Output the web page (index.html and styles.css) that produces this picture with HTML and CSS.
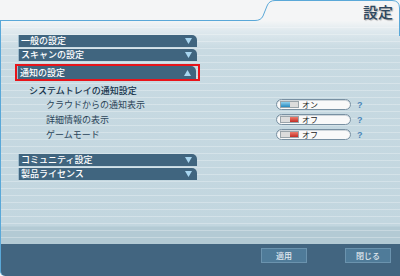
FILE: index.html
```html
<!DOCTYPE html>
<html lang="ja">
<head>
    <meta charset="UTF-8">
    <title>設定</title>
    <link rel="stylesheet" href="styles.css">
</head>
<body>

<div class="window">
    <!-- Title tab -->
    <header class="titlebar">
        <svg class="tab-outline" width="400" height="40" viewBox="0 0 400 40">
            <path d="M0 20.5 H255 Q261 20.5 263 16 L267 6 Q269 0.5 275 0.5 H392 Q399.5 0.5 399.5 8 V36" fill="none" stroke="#5aa8d8" stroke-width="1"/>
        </svg>
        <h1 class="title">設定</h1>
    </header>

    <!-- Settings list -->
    <main class="panel">
        <div class="bar">一般の設定
            <svg class="arrow" width="7" height="6" viewBox="0 0 7 6"><path d="M0 0 H7 L3.5 6 Z"/></svg>
        </div>
        <div class="bar">スキャンの設定
            <svg class="arrow" width="7" height="6" viewBox="0 0 7 6"><path d="M0 0 H7 L3.5 6 Z"/></svg>
        </div>
        <div class="bar-selected">
            <div class="bar bar-open">通知の設定
                <svg class="arrow" width="7" height="6" viewBox="0 0 7 6"><path d="M0 6 H7 L3.5 0 Z"/></svg>
            </div>
        </div>

        <div class="group-title">システムトレイの通知設定</div>
        <div class="row">
            <span class="row-label">クラウドからの通知表示</span>
            <span class="pill"><span class="switch on"><span></span><span></span></span>オン</span>
            <span class="help">?</span>
        </div>
        <div class="row">
            <span class="row-label">詳細情報の表示</span>
            <span class="pill"><span class="switch off"><span></span><span></span></span>オフ</span>
            <span class="help">?</span>
        </div>
        <div class="row">
            <span class="row-label">ゲームモード</span>
            <span class="pill"><span class="switch off"><span></span><span></span></span>オフ</span>
            <span class="help">?</span>
        </div>

        <div class="bar bar-spaced">コミュニティ設定
            <svg class="arrow" width="7" height="6" viewBox="0 0 7 6"><path d="M0 0 H7 L3.5 6 Z"/></svg>
        </div>
        <div class="bar">製品ライセンス
            <svg class="arrow" width="7" height="6" viewBox="0 0 7 6"><path d="M0 0 H7 L3.5 6 Z"/></svg>
        </div>
    </main>

    <!-- Bottom buttons -->
    <footer class="actions">
        <button class="action-button">適用</button>
        <button class="action-button">閉じる</button>
    </footer>
</div>

</body>
</html>
```

FILE: styles.css
```css
* {
    box-sizing: border-box;
}

body {
    margin: 0;
    width: 400px;
    height: 276px;
    overflow: hidden;
    background-color: #f4f5f6;
    font-family: "Noto Sans CJK JP", sans-serif;
}

.window {
    display: flex;
    flex-direction: column;
    height: 276px;
}

/* Title tab */
.titlebar {
    position: relative;
    height: 21px;
    display: flex;
    justify-content: flex-end;
    padding: 3px 7px 0 0;
}

.tab-outline {
    position: absolute;
    top: 0;
    left: 0;
    z-index: 2;
    pointer-events: none;
}

.title {
    margin: 0;
    font-size: 15px;
    font-weight: 500;
    line-height: 17px;
    color: #2f4860;
    text-shadow: 1px 1px 1px rgba(0, 0, 0, 0.3);
}

/* Panel */
.panel {
    flex: 1;
    display: flex;
    flex-direction: column;
    align-items: flex-start;
    padding: 14px 0 0 17px;
    border-left: 1px solid #5aa8d8;
    background:
        repeating-linear-gradient(to bottom, transparent 0, transparent 6px, rgba(255, 255, 255, 0.28) 6px, rgba(255, 255, 255, 0.28) 7px),
        linear-gradient(to bottom, #f3f5f6 0, #dfe9ee 10px, #c8dae2 28px, #c2d6df 205px, #b3cad4 206px, #b3cad4 100%);
}

/* Section bars */
.bar {
    width: 179px;
    height: 12px;
    margin-bottom: 2px;
    display: flex;
    justify-content: space-between;
    align-items: center;
    padding: 0 5px 0 2px;
    background-color: #40657f;
    border-left: 1px solid #9dbbcc;
    border-radius: 0 5px 0 0;
    color: #fff;
    font-size: 9px;
    font-weight: 500;
    line-height: 12px;
}

.arrow {
    fill: #a9d6f0;
}

.bar-selected {
    margin: 1px 0 2px -3px;
    border: 2px solid #e8141a;
    padding: 0 2px 0 0;
}

.bar-open {
    height: 13px;
    margin-bottom: 0;
}

.bar-spaced {
    margin-top: 12px;
}

/* Notification rows */
.group-title {
    height: 12px;
    margin: 2px 0 0 11px;
    font-size: 9px;
    font-weight: 500;
    line-height: 12px;
    color: #14324a;
}

.row {
    height: 15px;
    display: flex;
    align-items: center;
}

.row-label {
    width: 258px;
    padding-left: 28px;
    font-size: 9px;
    color: #2a4458;
}

.pill {
    width: 75px;
    height: 11px;
    display: flex;
    align-items: center;
    gap: 3px;
    padding-left: 3px;
    border: 1px solid #7890a2;
    border-radius: 6px;
    background-color: #f9f9f9;
    box-shadow: inset 0 1px 0 #cfd6db;
    font-size: 8px;
    line-height: 9px;
    color: #222;
}

.switch {
    width: 19px;
    height: 7px;
    display: flex;
    border: 1px solid #9aa4aa;
}

.switch span {
    flex: 1;
    background-color: #dcdcdc;
}

.switch.on span:first-child {
    background: linear-gradient(to bottom, #8ed0ef, #2688bd);
}

.switch.off span:last-child {
    background: linear-gradient(to bottom, #ee7a6a, #c22e26);
}

.help {
    margin-left: 6px;
    font-family: "Liberation Sans", sans-serif;
    font-size: 9px;
    font-weight: bold;
    color: #4a86b8;
}

/* Bottom buttons */
.actions {
    height: 32px;
    display: flex;
    justify-content: flex-end;
    gap: 38px;
    padding: 4px 9px 0 0;
    background-color: #426580;
    border-left: 1px solid #5aa8d8;
    border-radius: 0 0 0 5px;
}

.action-button {
    width: 46px;
    height: 15px;
    padding: 0;
    background-color: #4f7b99;
    border: 1px solid #6b93ae;
    color: #e2eaf0;
    font-family: "Noto Sans CJK JP", sans-serif;
    font-size: 8px;
    font-weight: 500;
    line-height: 13px;
}
```
